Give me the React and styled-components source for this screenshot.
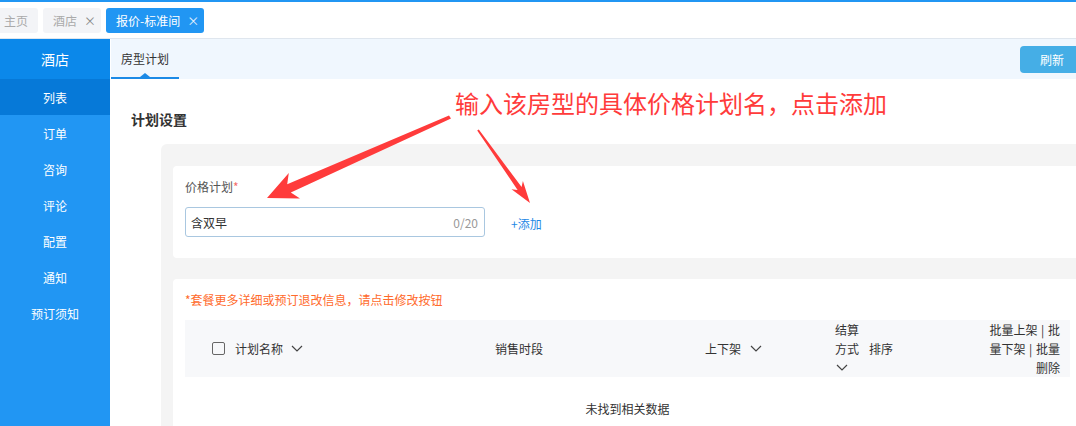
import styled, { createGlobalStyle } from "styled-components";

const GlobalStyle = createGlobalStyle`
  html, body {
    margin: 0;
    padding: 0;
    overflow: hidden;
    background: #fff;
  }
  body {
    font-family: "Noto Sans CJK SC", "Noto Sans", "Liberation Sans", sans-serif;
    font-size: 12px;
    color: #333;
  }
  * { box-sizing: border-box; }
`;

const Page = styled.div`
  position: relative;
  width: 1094px;
  height: 426px;
  overflow: hidden;
  display: flex;
  flex-direction: column;
`;

/* ---------- top tabs ---------- */

const TabBar = styled.div`
  height: 39px;
  border-top: 2px solid #2196f3;
  border-bottom: 1px solid #dfe6ee;
  display: flex;
  align-items: center;
  gap: 5px;
  margin-left: -6px;
`;

const PageTab = styled.div`
  height: 25px;
  display: flex;
  align-items: center;
  padding: 0 ${(p) => (p.$closable ? "5px" : "10px")} 0 10px;
  border-radius: 3px;
  background: ${(p) => (p.$active ? "#2196f3" : "#f3f4f7")};
  color: ${(p) => (p.$active ? "#fff" : "#aaa")};
  font-size: 12px;
`;

const Close = styled.span`
  margin-left: 7px;
  font-size: 12px;
  color: ${(p) => (p.$active ? "#e8f3fe" : "#888")};
`;

/* ---------- body ---------- */

const Body = styled.div`
  flex: 1;
  display: flex;
  min-height: 0;
`;

const Sidebar = styled.nav`
  width: 110px;
  flex-shrink: 0;
  background: #2196f3;
  display: flex;
  flex-direction: column;
`;

const SideHead = styled.div`
  height: 40px;
  background: #0b88ea;
  color: #fff;
  font-size: 14px;
  display: flex;
  align-items: center;
  justify-content: center;
`;

const SideItem = styled.div`
  height: 36px;
  display: flex;
  align-items: center;
  justify-content: center;
  color: #fff;
  font-size: 12px;
  background: ${(p) => (p.$active ? "#0679d8" : "transparent")};
`;

const Main = styled.main`
  flex: 1;
  margin-left: 1px;
  display: flex;
  flex-direction: column;
  min-width: 0;
`;

const SubHeader = styled.div`
  height: 40px;
  background: #f0f7fe;
  display: flex;
  align-items: center;
  justify-content: space-between;
  padding-right: 10px;
`;

const SubTab = styled.div`
  position: relative;
  height: 40px;
  width: 68px;
  display: flex;
  align-items: center;
  justify-content: center;
  color: #333;
  font-size: 12px;
  border-bottom: 2px solid #1b8ae6;

  &::after {
    content: "";
    position: absolute;
    left: 50%;
    bottom: 0;
    margin-left: -5px;
    border-left: 5px solid transparent;
    border-right: 5px solid transparent;
    border-bottom: 4px solid #1b8ae6;
  }
`;

const RefreshButton = styled.button`
  width: 64px;
  height: 27px;
  border: none;
  border-radius: 4px;
  background: #45aee6;
  color: #fff;
  font-family: inherit;
  font-size: 12px;
  text-align: left;
  padding-left: 20px;
`;

const Divider = styled.div`
  margin-top: 10px;
  height: 1px;
  background: #e5e5e5;
`;

const SectionTitle = styled.h2`
  margin: 20px 0 15px 20px;
  font-size: 14px;
  line-height: 20px;
  font-weight: 700;
  color: #333;
`;

const Panel = styled.div`
  flex: 1;
  margin-left: 50px;
  background: #f4f4f4;
  border-radius: 6px 0 0 0;
  padding: 22px 12px 0 12px;
  display: flex;
  flex-direction: column;
  gap: 21px;
`;

const Card = styled.div`
  background: #fff;
  border-radius: 4px;
  padding: ${(p) => p.$padding || "12px"};
  flex: ${(p) => (p.$grow ? 1 : "none")};
`;

const Label = styled.div`
  line-height: 18px;
  color: #555;

  & > span {
    color: #f56c6c;
  }
`;

const FieldRow = styled.div`
  margin-top: 11px;
  display: flex;
  align-items: center;
  gap: 26px;
`;

const InputBox = styled.div`
  width: 300px;
  height: 30px;
  border: 1px solid #a9c7e0;
  border-radius: 3px;
  display: flex;
  align-items: center;
  justify-content: space-between;
  padding: 0 6px 0 5px;
  color: #333;
`;

const Counter = styled.span`
  color: #999;
`;

const AddLink = styled.a`
  color: #1e88e5;
  font-size: 12px;
  margin-top: 2px;
`;

const Warning = styled.div`
  line-height: 18px;
  color: #ff6a2b;
`;

const TableHead = styled.div`
  margin-top: 11px;
  height: 57px;
  background: #f7f8fa;
  display: grid;
  grid-template-columns: 300px 210px 130px 34px 80px 1fr;
  align-items: center;
  color: #333;
  line-height: 19px;
`;

const HeadCell = styled.div`
  padding-left: ${(p) => p.$pl || "10px"};
  padding-right: ${(p) => p.$pr || "0"};
  display: flex;
  align-items: center;
  justify-content: ${(p) => (p.$right ? "flex-end" : "flex-start")};
`;

const StackCell = styled.div`
  padding-left: 10px;
  display: flex;
  flex-direction: column;
  align-items: flex-start;
  width: 34px;

  & > span {
    height: 19px;
    display: flex;
    align-items: center;
  }
`;

const Checkbox = styled.span`
  width: 13px;
  height: 13px;
  border: 1px solid #666;
  border-radius: 2px;
  margin-right: 10px;
`;

const Actions = styled.div`
  width: 72px;
  text-align: right;
  word-break: break-all;
  word-spacing: 1px;
`;

const Empty = styled.div`
  height: 62px;
  display: flex;
  align-items: center;
  justify-content: center;
  color: #333;
`;

/* ---------- annotation overlay ---------- */

const Note = styled.div`
  position: absolute;
  left: 455px;
  top: 88px;
  font-size: 24px;
  line-height: 30px;
  color: #ff3b3b;
  white-space: nowrap;
`;

const Arrows = styled.svg`
  position: absolute;
  left: 0;
  top: 0;
  pointer-events: none;
`;

const Chevron = ({ ml = 8 }) => (
  <svg width="12" height="7" viewBox="0 0 12 7" style={{ marginLeft: ml }}>
    <polyline points="1,1 6,6 11,1" fill="none" stroke="#444" strokeWidth="1.2" />
  </svg>
);

const menu = ["订单", "咨询", "评论", "配置", "通知", "预订须知"];

export default function App() {
  return (
    <>
      <GlobalStyle />
      <Page>
        <TabBar>
          <PageTab>主页</PageTab>
          <PageTab $closable>
            酒店<Close>×</Close>
          </PageTab>
          <PageTab $active $closable>
            报价-标准间<Close $active>×</Close>
          </PageTab>
        </TabBar>

        <Body>
          <Sidebar>
            <SideHead>酒店</SideHead>
            <SideItem $active>列表</SideItem>
            {menu.map((m) => (
              <SideItem key={m}>{m}</SideItem>
            ))}
          </Sidebar>

          <Main>
            <SubHeader>
              <SubTab>房型计划</SubTab>
              <RefreshButton>刷新</RefreshButton>
            </SubHeader>
            <Divider />
            <SectionTitle>计划设置</SectionTitle>

            <Panel>
              <Card $padding="12px 12px 21px">
                <Label>
                  价格计划<span>*</span>
                </Label>
                <FieldRow>
                  <InputBox>
                    <span>含双早</span>
                    <Counter>0/20</Counter>
                  </InputBox>
                  <AddLink>+添加</AddLink>
                </FieldRow>
              </Card>

              <Card $grow>
                <Warning>*套餐更多详细或预订退改信息，请点击修改按钮</Warning>
                <TableHead>
                  <HeadCell $pl="27px">
                    <Checkbox />
                    计划名称
                    <Chevron />
                  </HeadCell>
                  <HeadCell>销售时段</HeadCell>
                  <HeadCell>
                    上下架
                    <Chevron ml={9} />
                  </HeadCell>
                  <StackCell>
                    <span>结算</span>
                    <span>方式</span>
                    <span>
                      <Chevron ml={1} />
                    </span>
                  </StackCell>
                  <HeadCell>排序</HeadCell>
                  <HeadCell $right $pr="10px">
                    <Actions>批量上架 | 批量下架 | 批量删除</Actions>
                  </HeadCell>
                </TableHead>
                <Empty>未找到相关数据</Empty>
              </Card>
            </Panel>
          </Main>
        </Body>

        <Note>输入该房型的具体价格计划名，点击添加</Note>
        <Arrows width="1094" height="426" viewBox="0 0 1094 426">
          <polygon
            points="449,115.5 287.2,184.2 288.8,173 267,198 300,198.6 290.8,192.4 451,118.5"
            fill="#ff3b3b"
          />
          <polygon
            points="477.2,130.4 517.6,189.9 511.5,189.3 530,203 522.9,181.1 521.6,187 478.8,129.6"
            fill="#ff3b3b"
          />
        </Arrows>
      </Page>
    </>
  );
}
